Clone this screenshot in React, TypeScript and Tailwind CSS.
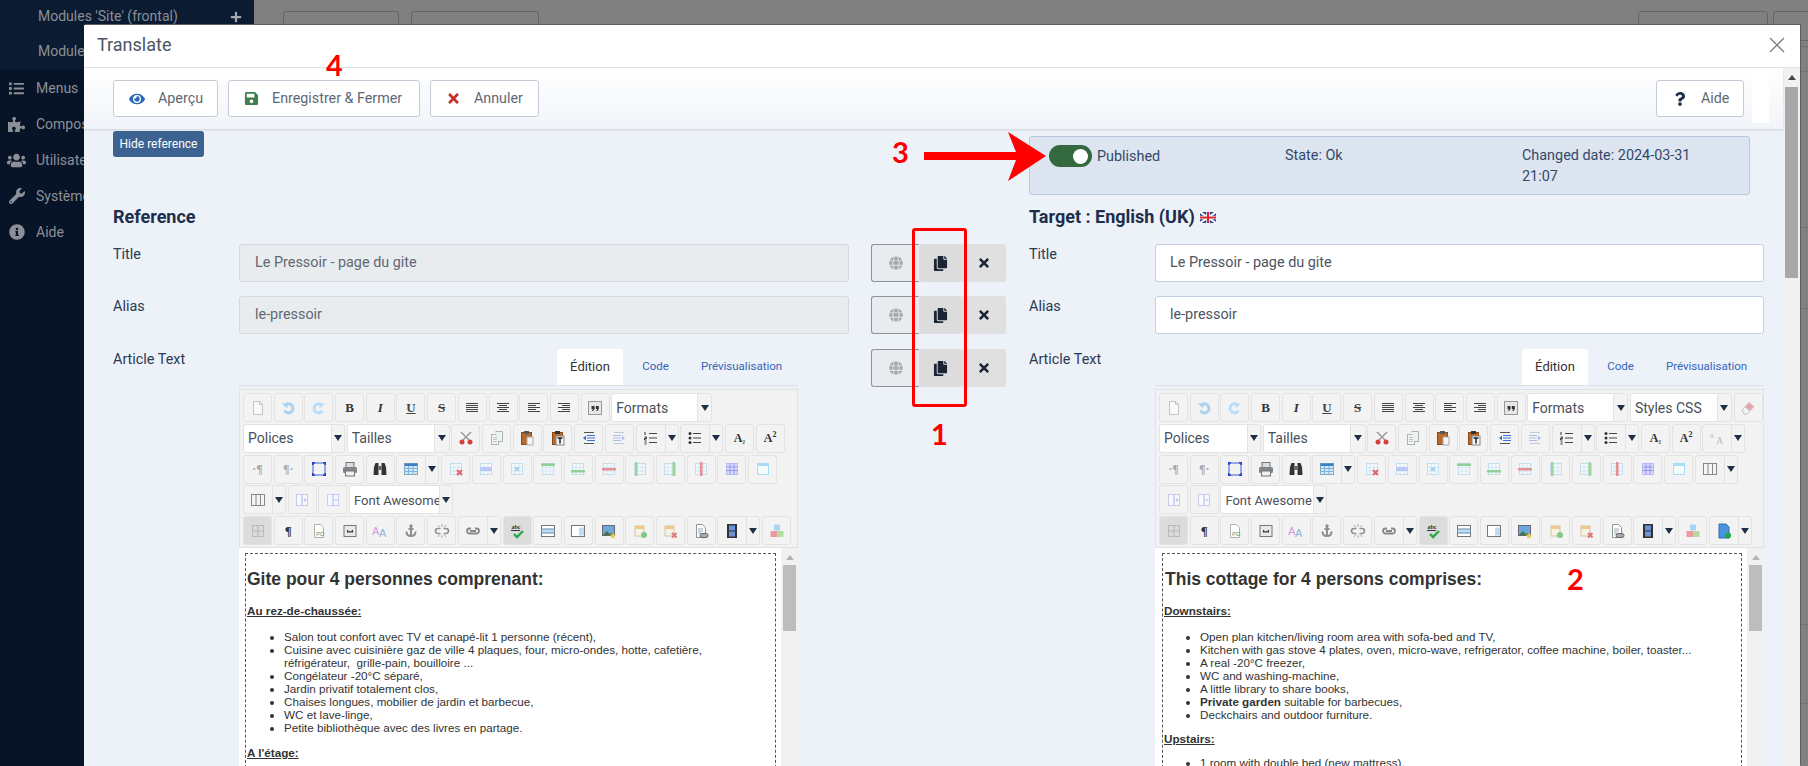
import type { ReactNode } from "react";
import { FaCopy, FaEye, FaGlobe, FaInfoCircle, FaList, FaPlus, FaPuzzlePiece, FaQuestion, FaSave, FaTimes, FaUsers, FaWrench } from "react-icons/fa";

const line = (d: string, c = "#555", w = 1) => <path d={d} stroke={c} strokeWidth={w} fill="none" />;
const glyph = (t: string, cls: string) => <span className={cls}>{t}</span>;

// table style icon, accent is the coloured bit
const tbl = (accent: ReactNode, stroke = "#c4dcec") => (
  <>
    <rect x="2.5" y="2.5" width="11" height="11" fill="#f4f9fc" stroke={stroke} />
    {line("M2.5 6.5h11M2.5 10h11M6 2.5v11M10 2.5v11", "#d5e6f1")}
    {accent}
  </>
);

const ICONS: Record<string, ReactNode> = {
  doc: <><path d="M3.5 1.5h6l3 3v10h-9z" fill="#fbfbf6" stroke="#bcc7c6" /><path d="M9.5 1.5v3h3" fill="none" stroke="#bcc7c6" /></>,
  undo: <>{line("M5 5.5a4.5 4.5 0 1 1-.5 5", "#a9d2f0", 3)}<path d="M1.5 3.5h6v5z" fill="#a9d2f0" /></>,
  redo: <>{line("M11 5.5a4.5 4.5 0 1 0 .5 5", "#bddcf5", 3)}<path d="M14.5 3.5h-6v5z" fill="#bddcf5" /></>,
  just: line("M2 3.5h12M2 5.5h12M2 7.5h12M2 9.5h12M2 11.5h12", "#444"),
  cent: line("M2 3.5h12M4 5.5h8M2 7.5h12M4 9.5h8M2 11.5h12", "#444"),
  left: line("M2 3.5h12M2 5.5h8M2 7.5h12M2 9.5h8M2 11.5h12", "#444"),
  right: line("M2 3.5h12M6 5.5h8M2 7.5h12M6 9.5h8M2 11.5h12", "#444"),
  quote: <><rect x="1.5" y="1.5" width="13" height="13" fill="#e8e8e8" stroke="#999" /><path d="M4.5 6h3v3l-1.5 2h-1l.8-2H4.5zM8.8 6h3v3l-1.5 2h-1l.8-2H8.8z" fill="#333" /></>,
  cut: <>{line("M3 2l8 8M13 2l-8 8", "#9a9a9a", 1.5)}<circle cx="4" cy="12" r="2.5" fill="#d8403c" /><circle cx="12" cy="12" r="2.5" fill="#d8403c" /></>,
  copy: <><rect x="2.5" y="4.5" width="7" height="10" fill="#f3f7f3" stroke="#a9b6b0" /><path d="M6.5 1.5h7v10h-4" fill="#eef3ee" stroke="#a9b6b0" />{line("M4 7.5h4M4 9.5h4M4 11.5h4", "#b9c6c0")}</>,
  paste: <><rect x="2.5" y="2.5" width="10" height="12" fill="#b9692a" stroke="#8a4c1c" /><rect x="5" y="1" width="5" height="3" fill="#555" /><path d="M8 7h6v8H8z" fill="#f5f5f5" stroke="#aaa" /></>,
  ptext: <><rect x="2.5" y="2.5" width="10" height="12" fill="#b9692a" stroke="#8a4c1c" /><rect x="5" y="1" width="5" height="3" fill="#333" /><rect x="6" y="6" width="8" height="9" fill="#f5f5f5" stroke="#888" />{line("M7.5 8h5M10 8v5.5", "#222", 1.5)}</>,
  outd: <>{line("M3 2.5h10M3 13.5h10", "#555")}{line("M6 5.5h8M6 8h8M6 10.5h8", "#3f6fd8")}<path d="M2 8l3-2.5v5z" fill="#3f6fd8" /></>,
  ind: <>{line("M3 2.5h10M3 13.5h10", "#c3c9d4")}{line("M2 5.5h8M2 8h8M2 10.5h8", "#aebde8")}<path d="M14 8l-3-2.5v5z" fill="#aebde8" /></>,
  ol: <>{line("M6 3.5h8M6 8h8M6 12.5h8", "#444", 1.2)}{line("M2 2v3M1.5 7h2v1.5h-2V10h2M1.5 12h2M1.5 14h2", "#333")}</>,
  ul: <><circle cx="3" cy="3.5" r="1.5" fill="#333" /><circle cx="3" cy="8" r="1.5" fill="#333" /><circle cx="3" cy="12.5" r="1.5" fill="#333" />{line("M6 3.5h8M6 8h8M6 12.5h8", "#444", 1.2)}</>,
  lang: <><text x="1" y="8" fontSize="8" fontFamily="Liberation Serif" fill="#bbb">a</text><text x="7" y="14" fontSize="10" fontFamily="Liberation Serif" fill="#bbb">A</text></>,
  full: <><rect x="2" y="2" width="12" height="12" fill="none" stroke="#3f5fd8" /><path d="M1 1h3v1.5H2.5V4H1zM12 1h3v3h-1.5V2.5H12zM1 12h1.5v1.5H4V15H1zM15 12v3h-3v-1.5h1.5V12z" fill="#2540c8" /></>,
  print: <><rect x="4" y="1.5" width="8" height="5" fill="#ddd" stroke="#777" /><rect x="1" y="6" width="14" height="6" rx="1.5" fill="#7d848c" /><rect x="3.5" y="10" width="9" height="5" fill="#eee" stroke="#777" /></>,
  binoc: <><path d="M2 6l1.5-4h3V14H1.5zM14 6l-1.5-4h-3V14h5z" fill="#333" /><rect x="6.5" y="5" width="3" height="4" fill="#666" /></>,
  table: <><rect x="1.5" y="2.5" width="13" height="11" fill="#cfeafc" stroke="#8aa9b8" /><rect x="1.5" y="2.5" width="13" height="2.5" fill="#3e7fc8" />{line("M1.5 7.5h13M1.5 10.5h13M5.5 5v8.5M10 5v8.5", "#7fb2d6")}</>,
  tdel: tbl(<path d="M9 9l5 5m0-5l-5 5" stroke="#e0656a" strokeWidth="2" />),
  rowp: tbl(<rect x="2" y="6" width="12" height="4" fill="#b9c8f2" />),
  cellp: tbl(<rect x="6" y="6" width="4" height="4" fill="#a9d4f5" />),
  rowa: tbl(<rect x="1" y="2.5" width="14" height="2.5" fill="#8fd096" />),
  rowb: tbl(<rect x="1" y="9" width="14" height="2.5" fill="#8fd096" />),
  rowd: tbl(<rect x="1" y="7" width="14" height="2.5" fill="#e88f94" />),
  cola: tbl(<rect x="3" y="1" width="2.5" height="14" fill="#9ad49f" />),
  colb: tbl(<rect x="10.5" y="1" width="2.5" height="14" fill="#9ad49f" />),
  cold: tbl(<rect x="7" y="1" width="2.5" height="14" fill="#e88f94" />),
  tprop: <><rect x="2.5" y="2.5" width="11" height="11" fill="#d9dcfa" stroke="#b7bcf2" />{line("M2.5 6h11M2.5 9.5h11M6 2.5v11M10 2.5v11", "#8f98ea")}</>,
  tcap: <><rect x="2.5" y="2.5" width="11" height="11" fill="#f6fbfe" stroke="#a9dcf5" /><rect x="2.5" y="2.5" width="11" height="2.5" fill="#a9dcf5" /></>,
  cols: <><rect x="1.5" y="2.5" width="13" height="11" fill="#f5f5f5" stroke="#888" />{line("M6 2.5v11M10.5 2.5v11", "#888")}</>,
  split: <><rect x="2.5" y="2.5" width="11" height="11" fill="#f8f9ff" stroke="#c8cdee" />{line("M8 2.5v11M9.5 8h3M11 6.5v3", "#aab2e6")}</>,
  merge: <><rect x="2.5" y="2.5" width="11" height="11" fill="#f8f9ff" stroke="#c8cdee" />{line("M8 2.5v11M9.5 8h3", "#aab2e6")}</>,
  grid: <>{line("M8 3v10M3 8h10", "#b5b5b5")}<rect x="2.5" y="2.5" width="11" height="11" fill="none" stroke="#aaa" strokeDasharray="2 1" /></>,
  pdf: <><path d="M3.5 1.5h6l3 3v10h-9z" fill="#fff" stroke="#a9b6b0" /><text x="5" y="13" fontSize="6" fill="#4a9a8a" fontFamily="Liberation Sans">PD</text></>,
  tmpl: <><rect x="2" y="2.5" width="12" height="11" fill="#e8e8e8" stroke="#777" /><path d="M5 7v2.5h6V7h-1.2v1.2H6.2V7z" fill="#333" /></>,
  aa: <><text x="0" y="12" fontSize="11" fill="#cf9ade" fontFamily="Liberation Sans">A</text><text x="7" y="14" fontSize="11" fill="#8fb5da" fontFamily="Liberation Sans">A</text></>,
  anch: <>{line("M8 3v11M3.5 8.5c0 3 2 4.5 4.5 4.5s4.5-1.5 4.5-4.5", "#8f8f8f", 2)}{line("M5.5 6h5", "#8f8f8f", 2)}<circle cx="8" cy="3" r="1.7" fill="#8f8f8f" /></>,
  unlink: <>{line("M6.5 5.5H4a2.5 2.5 0 0 0 0 5h2.5M9.5 5.5H12a2.5 2.5 0 0 1 0 5H9.5", "#8f8f8f", 1.7)}{line("M8 1v3M8 12v3M4 2l1.5 2M12 2l-1.5 2M4 14l1.5-2M12 14l-1.5-2", "#aaa")}</>,
  link: <>{line("M6 5.5H4.5a2.5 2.5 0 0 0 0 5H11.5a2.5 2.5 0 0 0 0-5H10M5 8h6", "#888", 1.8)}</>,
  spell: <><text x="2.5" y="6" fontSize="6" fontFamily="Liberation Serif" fontWeight="bold" fill="#333">abc</text>{line("M2 7.5h9", "#333")}{line("M5 11l3 3 6-6", "#2ca64a", 2.4)}</>,
  band: <><rect x="1.5" y="2.5" width="13" height="11" fill="#fff" stroke="#777" /><rect x="1.5" y="6" width="13" height="4" fill="#bcdcf5" stroke="#6b8aa0" /></>,
  side: <><rect x="1.5" y="2.5" width="13" height="11" fill="#fff" stroke="#777" /><rect x="9" y="4.5" width="5" height="8" fill="#bcdcf5" /></>,
  img: <><rect x="1.5" y="2.5" width="12" height="10" fill="#6fa7d8" stroke="#667" /><path d="M2 12l4-4 3 3 2-1 2 2z" fill="#3d7a45" /><path d="M12 9.5l1 2 2.2.3-1.6 1.5.4 2.2-2-1-2 1 .4-2.2-1.6-1.5 2.2-.3z" fill="#e6c84a" /></>,
  cadd: <><rect x="3" y="3" width="9" height="10" fill="#f6f3e6" stroke="#d2c8a2" /><rect x="3" y="3" width="9" height="3" fill="#f0c88a" /><circle cx="12" cy="12" r="3" fill="#7fc98a" /></>,
  cdel: <><rect x="3" y="3" width="9" height="10" fill="#f6f3e6" stroke="#d2c8a2" /><rect x="3" y="3" width="9" height="3" fill="#f0c88a" /><path d="M10 10l4.5 4.5m0-4.5L10 14.5" stroke="#e0757a" strokeWidth="2" /></>,
  dlink: <><path d="M3.5 1.5h6l3 3v10h-9z" fill="#fff" stroke="#8a9a95" />{line("M5 6h5M5 8h5M5 10h3", "#9ab")}<rect x="7" y="10.5" width="8" height="4" rx="2" fill="#aaa" stroke="#666" /></>,
  film: <><rect x="3" y="1" width="10" height="14" fill="#333" /><rect x="5" y="2.5" width="6" height="5" fill="#6a93d8" /><rect x="5" y="8.5" width="6" height="5" fill="#6a93d8" /></>,
  blocks: <><rect x="5" y="1.5" width="6" height="6" fill="#a9d4f5" /><rect x="1.5" y="8" width="6.5" height="6" fill="#ec9a9f" /><rect x="8" y="8" width="6.5" height="6" fill="#b4dca0" /></>,
  dnew: <><path d="M3 1h7l3 3v11H3z" fill="#4a94de" stroke="#2f70b0" /><circle cx="12" cy="12.5" r="3" fill="#1aa84a" /></>,
  erase: <><path d="M2 10l7-7.5 5 4-7 7.5H4z" fill="#e8a3a8" stroke="#c9c9c9" /><path d="M2 10l3-3 5 4-3 3H4z" fill="#f2f2f2" stroke="#c9c9c9" /></>,
};

function Icon({ name }: { name: string }) {
  if (name === "B") return glyph("B", "font-['Liberation_Serif'] font-bold text-[13px] text-[#333]");
  if (name === "I") return glyph("I", "font-['Liberation_Serif'] italic font-bold text-[13px] text-[#333]");
  if (name === "U") return glyph("U", "font-['Liberation_Serif'] font-bold underline text-[13px] text-[#444]");
  if (name === "S") return glyph("S", "font-['Liberation_Serif'] font-bold line-through text-[13px] text-[#444]");
  if (name === "sub") return <span className="font-['Liberation_Serif'] font-bold text-[12px] text-[#333]">A<span className="text-[8px]">₂</span></span>;
  if (name === "sup") return <span className="font-['Liberation_Serif'] font-bold text-[12px] text-[#333]">A<span className="text-[8px] align-super leading-none">2</span></span>;
  if (name === "pl") return glyph("·¶", "font-['Liberation_Serif'] font-bold text-[12px] text-[#aaa]");
  if (name === "pr") return glyph("¶·", "font-['Liberation_Serif'] font-bold text-[12px] text-[#aaa]");
  if (name === "para") return glyph("¶", "font-['Liberation_Serif'] font-bold text-[13px] text-[#333]");
  return <svg width="16" height="16" viewBox="0 0 16 16">{ICONS[name]}</svg>;
}

function Arrow({ w = 14 }: { w?: number }) {
  return (
    <span style={{ width: w }} className="flex h-full shrink-0 items-center justify-center border-l border-[#e2e2e2]">
      <svg width="8" height="6" viewBox="0 0 8 6"><path d="M0 0h8L4 6z" fill="#1f2f47" /></svg>
    </span>
  );
}

type Item = string | { sel: string; w: number; a: number } | { sp: string };

function Tool({ item }: { item: Item }) {
  const box = "flex h-[29px] shrink-0 items-center rounded-[3px] border border-[#e3e3e3]";
  if (typeof item === "string") {
    const active = item === "grid" || item === "spell";
    return (
      <span className={`${box} w-[29px] justify-center ${active ? "bg-[#dcdcdc]" : "bg-[#f3f3f3]"}`}>
        <Icon name={item} />
      </span>
    );
  }
  if ("sp" in item) {
    return (
      <span className={`${box} w-[43px] bg-[#f3f3f3]`}>
        <span className="flex w-[28px] justify-center"><Icon name={item.sp} /></span>
        <Arrow w={13} />
      </span>
    );
  }
  const size = item.sel === "Font Awesome" ? "text-[13px]" : "text-[14px]";
  return (
    <span className={`${box} bg-[#f3f3f3]`}>
      <span style={{ width: item.w }} className={`flex h-full items-center overflow-hidden rounded-l-[3px] bg-white pt-[1px] pl-[4px] ${size} whitespace-nowrap text-[#4a4f58]`}>{item.sel}</span>
      <Arrow w={item.a} />
    </span>
  );
}

const tableIcons = ["tdel", "rowp", "cellp", "cellp", "rowa", "rowb", "rowd", "cola", "colb", "cold", "tprop", "tcap"];
const formats = { sel: "Formats", w: 85, a: 14 };
const row1 = ["doc", "undo", "redo", "B", "I", "U", "S", "just", "cent", "left", "right", "quote", formats];
const row2 = [{ sel: "Polices", w: 87, a: 13 }, { sel: "Tailles", w: 86, a: 15 }, "cut", "copy", "paste", "ptext", "outd", "ind", { sp: "ol" }, { sp: "ul" }, "sub", "sup"];
const row3 = ["pl", "pr", "full", "print", "binoc", { sp: "table" }, ...tableIcons.slice(0, 3), ...tableIcons.slice(4)];
const row5 = ["grid", "para", "pdf", "tmpl", "aa", "anch", "unlink", { sp: "link" }, "spell", "band", "side", "img", "cadd", "cdel", "dlink", { sp: "film" }, "blocks"];

const leftRows: Item[][] = [row1, row2, row3, [{ sp: "cols" }, "split", "merge", { sel: "Font Awesome", w: 89, a: 13 }], row5];
const rightRows: Item[][] = [
  [...row1, { sel: "Styles CSS", w: 86, a: 14 }, "erase"],
  [...row2, { sp: "lang" }],
  [...row3, { sp: "cols" }],
  ["split", "merge", { sel: "Font Awesome", w: 92, a: 13 }],
  [...row5, { sp: "dnew" }],
];

function Editor({ rows, width, tabLeft, inset, children }: { rows: Item[][]; width: string; tabLeft: string; inset: string; children: ReactNode }) {
  return (
    <div className={`${width} shrink-0 pt-[1px]`}>
      <div className={`flex h-[36px] items-end border-b border-[#dde1e6] ${tabLeft} text-[11.5px] text-[#3566b8]`}>
        <span className="flex h-[36px] w-[66px] items-center justify-center rounded-t-[3px] bg-white text-[13px] text-[#333]">Édition</span>
        <span className="flex h-[36px] w-[65px] items-center justify-center">Code</span>
        <span className="flex h-[36px] w-[107px] items-center justify-center">Prévisualisation</span>
      </div>
      <div className="mt-[3px] flex flex-col gap-y-[1.75px] border border-[#dfe2e6] bg-[#f2f2f2] pt-[3px] pb-[2px] pl-[3px]">
        {rows.map((row, i) => (
          <div key={i} className="flex h-[29px] gap-x-[1.7px]">
            {row.map((item, j) => <Tool key={j} item={item} />)}
          </div>
        ))}
      </div>
      <div className="flex h-[230px] bg-white">
        <div className={`mt-[5px] ${inset} mr-[5px] flex-1 border border-b-0 border-dashed border-[#555] pl-[1px] font-['Liberation_Sans'] text-[#333]`}>
          {children}
        </div>
        <div className="flex w-[17px] shrink-0 flex-col items-center bg-[#f1f1f1] pt-[7px]">
          <svg width="8" height="5" viewBox="0 0 8 5"><path d="M4 0l4 5H0z" fill="#b5b5b5" /></svg>
          <div className="mt-[5px] h-[66px] w-[13px] bg-[#bdbdbd]" />
        </div>
      </div>
    </div>
  );
}

function SideBtn() {
  return (
    <div className="flex h-[38px] w-[135px] shrink-0">
      <span className="flex w-[48px] items-center justify-center rounded-l-[3px] border border-r-0 border-[#8d939b] bg-[#e9ecef] text-[#a3a8ad]">
        <FaGlobe size={14} />
      </span>
      <span className="flex w-[43px] items-center justify-center rounded-[3px] bg-[#dcdcdc] text-[#1b2433]"><FaCopy size={15} /></span>
      <span className="flex w-[44px] items-center justify-center rounded-r-[3px] bg-[#e0e0e0] text-[#1b2433]"><FaTimes size={14} /></span>
    </div>
  );
}

function ToolBtn({ icon, label, width }: { icon: ReactNode; label: string; width: string }) {
  return (
    <button className={`flex h-[37px] ${width} items-center gap-[13px] rounded-[3px] border border-[#c5cbd6] bg-white pl-[15px] text-[14.3px] text-[#5f6875]`}>
      {icon}
      {label}
    </button>
  );
}

function NavItem({ icon, label }: { icon: ReactNode; label: string }) {
  return (
    <div className="flex h-[36px] items-center text-[14px] text-[#8c9096]">
      <span className="flex w-[36px] justify-center pr-[3px] text-[#8c9096]">{icon}</span>
      {label}
    </div>
  );
}

// rows of the page list behind the modal, only their edges show past it
const backRows = [25, 156, 81, 316, 79, 78];

export default function App() {
  return (
    <div className="relative flex h-[766px] w-[1808px] overflow-hidden bg-[#808080] font-['Roboto',sans-serif]">
      {/* page behind the modal */}
      <aside className="w-[254px] shrink-0 bg-[#071428]">
        <div className="h-[70px] bg-[#0b1b31] pl-[38px] text-[14px] text-[#8c9096]">
          <div className="flex h-[33px] items-center justify-between pr-[12px]">
            Modules 'Site' (frontal) <FaPlus size={12} className="text-[#a5a8ad]" />
          </div>
          <div className="flex h-[37px] items-center">Modules</div>
        </div>
        <NavItem icon={<FaList size={15} />} label="Menus" />
        <NavItem icon={<FaPuzzlePiece size={17} />} label="Composants" />
        <NavItem icon={<FaUsers size={19} />} label="Utilisateurs" />
        <NavItem icon={<FaWrench size={16} />} label="Système" />
        <NavItem icon={<FaInfoCircle size={16} />} label="Aide" />
      </aside>
      <div className="flex min-w-0 flex-1 flex-col">
        <div className="flex h-[47px] shrink-0 gap-[12px] border-b border-[#707070] pt-[11px] pl-[29px]">
          <div className="h-[30px] w-[116px] shrink-0 rounded-[3px] border border-[#666]" />
          <div className="h-[30px] w-[128px] shrink-0 rounded-[3px] border border-[#666]" />
          <div className="ml-[1087px] h-[30px] w-[130px] shrink-0 rounded-[3px] border border-[#666]" />
          <div className="-ml-[7px] h-[30px] w-[60px] shrink-0 rounded-[3px] border border-[#666]" />
        </div>
        {backRows.map((h, i) => (
          <div key={i} style={{ height: h }} className="shrink-0 border-b border-[#707070]" />
        ))}
      </div>

      {/* modal */}
      <div className="absolute top-[25px] left-[84px] flex h-[741px] w-[1716px] flex-col overflow-hidden bg-white shadow-[1px_-1px_0_#5e5e5e]">
        <header className="flex h-[43px] shrink-0 items-center justify-between border-b border-[#dfe3e8] pr-[15px] pb-[3px] pl-[13px] text-[18px] text-[#4b5563]">
          Translate
          <svg width="16" height="16" viewBox="0 0 16 16"><path d="M1 1l14 14M15 1L1 15" stroke="#808080" strokeWidth="1.4" /></svg>
        </header>
        <div className="flex min-h-0 flex-1">
          <div className="relative min-w-0 flex-1 bg-[#edf1f8]">
            <div className="relative flex h-[61px] items-center gap-[10px] bg-gradient-to-b from-white to-[#f1f4f9] pl-[29px] shadow-[0_1px_2px_rgba(0,0,0,0.12)]">
              <ToolBtn icon={<FaEye size={16} className="text-[#2a69b8]" />} label="Aperçu" width="w-[105px]" />
              <ToolBtn icon={<FaSave size={15} className="text-[#3f7f4f]" />} label="Enregistrer & Fermer" width="w-[192px]" />
              <ToolBtn icon={<FaTimes size={15} className="text-[#c9302c]" />} label="Annuler" width="w-[109px]" />
              <div className="flex-1" />
              <button className="flex h-[37px] w-[88px] items-center gap-[14px] rounded-[3px] border border-[#c5cbd6] bg-white pl-[16px] text-[14.3px] text-[#5f6875]">
                <FaQuestion size={14} className="text-[#1f2f4a]" /> Aide
              </button>
              <div className="mr-[14px] -ml-[2px] mb-[6px] h-[55px] w-[17px] bg-white" />
            </div>

            <div className="flex gap-[23px] pl-[29px]">
              {/* reference column */}
              <div className="w-[893px] shrink-0">
                <button className="mt-[2px] h-[26px] w-[91px] rounded-[3px] bg-[#3c6291] text-[12px] text-white">Hide reference</button>
                <h2 className="mt-[49px] h-[22px] text-[18px] leading-[22px] font-bold text-[#1c2e4a]">Reference</h2>
                <div className="mt-[16px] flex h-[38px] items-start">
                  <label className="w-[126px] text-[14.4px] text-[#2a3a55]">Title</label>
                  <div className="flex h-[38px] w-[610px] items-center rounded-[3px] border border-[#d5d9de] bg-[#e9ecef] pb-[1px] pl-[15px] text-[14.4px] text-[#5f6875]">Le Pressoir - page du gite</div>
                  <div className="ml-[22px]"><SideBtn /></div>
                </div>
                <div className="mt-[14px] flex h-[38px] items-start">
                  <label className="w-[126px] text-[14.4px] text-[#2a3a55]">Alias</label>
                  <div className="flex h-[38px] w-[610px] items-center rounded-[3px] border border-[#d5d9de] bg-[#e9ecef] pb-[1px] pl-[15px] text-[14.4px] text-[#5f6875]">le-pressoir</div>
                  <div className="ml-[22px]"><SideBtn /></div>
                </div>
                <div className="mt-[15px] flex items-start">
                  <label className="w-[126px] text-[14.4px] text-[#2a3a55]">Article Text</label>
                  <Editor rows={leftRows} width="w-[559px]" tabLeft="pl-[318px]" inset="ml-[6px]">
                    <h3 className="mt-[15px] text-[17.5px] leading-[21px] font-bold">Gite pour 4 personnes comprenant:</h3>
                    <p className="mt-[14px] text-[11.7px] leading-[14px] font-bold underline">Au rez-de-chaussée:</p>
                    <ul className="mt-[12px] list-disc pl-[37px] text-[11.67px] leading-[13px]">
                      <li>Salon tout confort avec TV et canapé-lit 1 personne (récent),</li>
                      <li>Cuisine avec cuisinière gaz de ville 4 plaques, four, micro-ondes, hotte, cafetière,<br />réfrigérateur,&nbsp; grille-pain, bouilloire ...</li>
                      <li>Congélateur -20°C séparé,</li>
                      <li>Jardin privatif totalement clos,</li>
                      <li>Chaises longues, mobilier de jardin et barbecue,</li>
                      <li>WC et lave-linge,</li>
                      <li>Petite bibliothèque avec des livres en partage.</li>
                    </ul>
                    <p className="mt-[12px] text-[11.7px] leading-[14px] font-bold underline">A l'étage:</p>
                  </Editor>
                  <div className="ml-[73px]"><SideBtn /></div>
                </div>
              </div>

              {/* target column */}
              <div className="w-[735px] shrink-0">
                <div className="mt-[7px] flex h-[59px] w-[721px] rounded-[3px] border border-[#b8c9e0] bg-[#dde5f0] pt-[8px] pl-[19px] text-[14.4px] leading-[21px] text-[#33496a]">
                  <div className="flex h-[22px] w-[236px] items-center">
                    <span className="flex h-[22px] w-[43px] items-center justify-end rounded-full bg-[#34693f] pr-[4px]">
                      <span className="h-[15px] w-[15px] rounded-full bg-white" />
                    </span>
                    <span className="ml-[5px]">Published</span>
                  </div>
                  <div className="w-[237px]">State: Ok</div>
                  <div className="w-[175px]">Changed date: 2024-03-31 21:07</div>
                </div>
                <h2 className="mt-[11px] flex h-[22px] items-center gap-[5px] text-[18px] leading-[22px] font-bold text-[#1c2e4a]">
                  Target : English (UK)
                  <svg width="16" height="11" viewBox="0 0 16 11">
                    <rect width="16" height="11" fill="#2b3f8c" />
                    <path d="M0 0l16 11M16 0L0 11" stroke="#fff" strokeWidth="2" />
                    <path d="M8 0v11M0 5.5h16" stroke="#fff" strokeWidth="3.5" />
                    <path d="M8 0v11M0 5.5h16" stroke="#d8252f" strokeWidth="2" />
                  </svg>
                </h2>
                <div className="mt-[16px] flex h-[38px] items-start">
                  <label className="w-[126px] text-[14.4px] text-[#2a3a55]">Title</label>
                  <div className="flex h-[38px] w-[609px] items-center rounded-[3px] border border-[#c3cfe2] bg-white pb-[1px] pl-[14px] text-[14.4px] text-[#4b5563]">Le Pressoir - page du gite</div>
                </div>
                <div className="mt-[14px] flex h-[38px] items-start">
                  <label className="w-[126px] text-[14.4px] text-[#2a3a55]">Alias</label>
                  <div className="flex h-[38px] w-[609px] items-center rounded-[3px] border border-[#c3cfe2] bg-white pb-[1px] pl-[14px] text-[14.4px] text-[#4b5563]">le-pressoir</div>
                </div>
                <div className="mt-[15px] flex items-start">
                  <label className="w-[126px] text-[14.4px] text-[#2a3a55]">Article Text</label>
                  <Editor rows={rightRows} width="w-[609px]" tabLeft="pl-[367px]" inset="ml-[7px]">
                    <h3 className="mt-[15px] pl-[1px] text-[17.5px] leading-[21px] font-bold">This cottage for 4 persons comprises:</h3>
                    <p className="mt-[14px] text-[11.7px] leading-[14px] underline font-bold">Downstairs:</p>
                    <ul className="mt-[12px] list-disc pl-[36px] text-[11.67px] leading-[13px]">
                      <li>Open plan kitchen/living room area with sofa-bed and TV,</li>
                      <li>Kitchen with gas stove 4 plates, oven, micro-wave, refrigerator, coffee machine, boiler, toaster...</li>
                      <li>A real -20°C freezer,</li>
                      <li>WC and washing-machine,</li>
                      <li>A little library to share books,</li>
                      <li><b>Private garden</b> suitable for barbecues,</li>
                      <li>Deckchairs and outdoor furniture.</li>
                    </ul>
                    <p className="mt-[11px] text-[11.7px] leading-[14px] font-bold underline">Upstairs:</p>
                    <ul className="mt-[10px] list-disc pl-[36px] text-[11.67px] leading-[13px]">
                      <li>1 room with double bed (new mattress),</li>
                    </ul>
                  </Editor>
                </div>
              </div>
            </div>
          </div>
          {/* modal scrollbar */}
          <div className="flex w-[17px] shrink-0 flex-col items-center bg-[#f1f1f1] pt-[7px]">
            <svg width="8" height="5" viewBox="0 0 8 5"><path d="M4 0l4 5H0z" fill="#444" /></svg>
            <div className="mt-[7px] h-[191px] w-[13px] bg-[#a8a8a8]" />
          </div>
        </div>
      </div>

      {/* red annotations drawn over the screenshot */}
      <div className="absolute top-[228px] left-[912px] h-[179px] w-[55px] rounded-[3px] border-[3px] border-[#f00]" />
      <svg className="absolute top-[130px] left-[922px]" width="126" height="52" viewBox="0 0 126 52">
        <path d="M2 22h92L86 2l38 24-38 25 8-21H2z" fill="#f00" />
      </svg>
      <span className="absolute top-[47px] left-[326px] font-['Lato'] text-[29px] leading-[36px] font-bold text-[#f00]">4</span>
      <span className="absolute top-[134px] left-[892px] font-['Lato'] text-[29px] leading-[36px] font-bold text-[#f00]">3</span>
      <span className="absolute top-[416px] left-[931px] font-['Lato'] text-[29px] leading-[36px] font-bold text-[#f00]">1</span>
      <span className="absolute top-[561px] left-[1567px] font-['Lato'] text-[29px] leading-[36px] font-bold text-[#f00]">2</span>
    </div>
  );
}
